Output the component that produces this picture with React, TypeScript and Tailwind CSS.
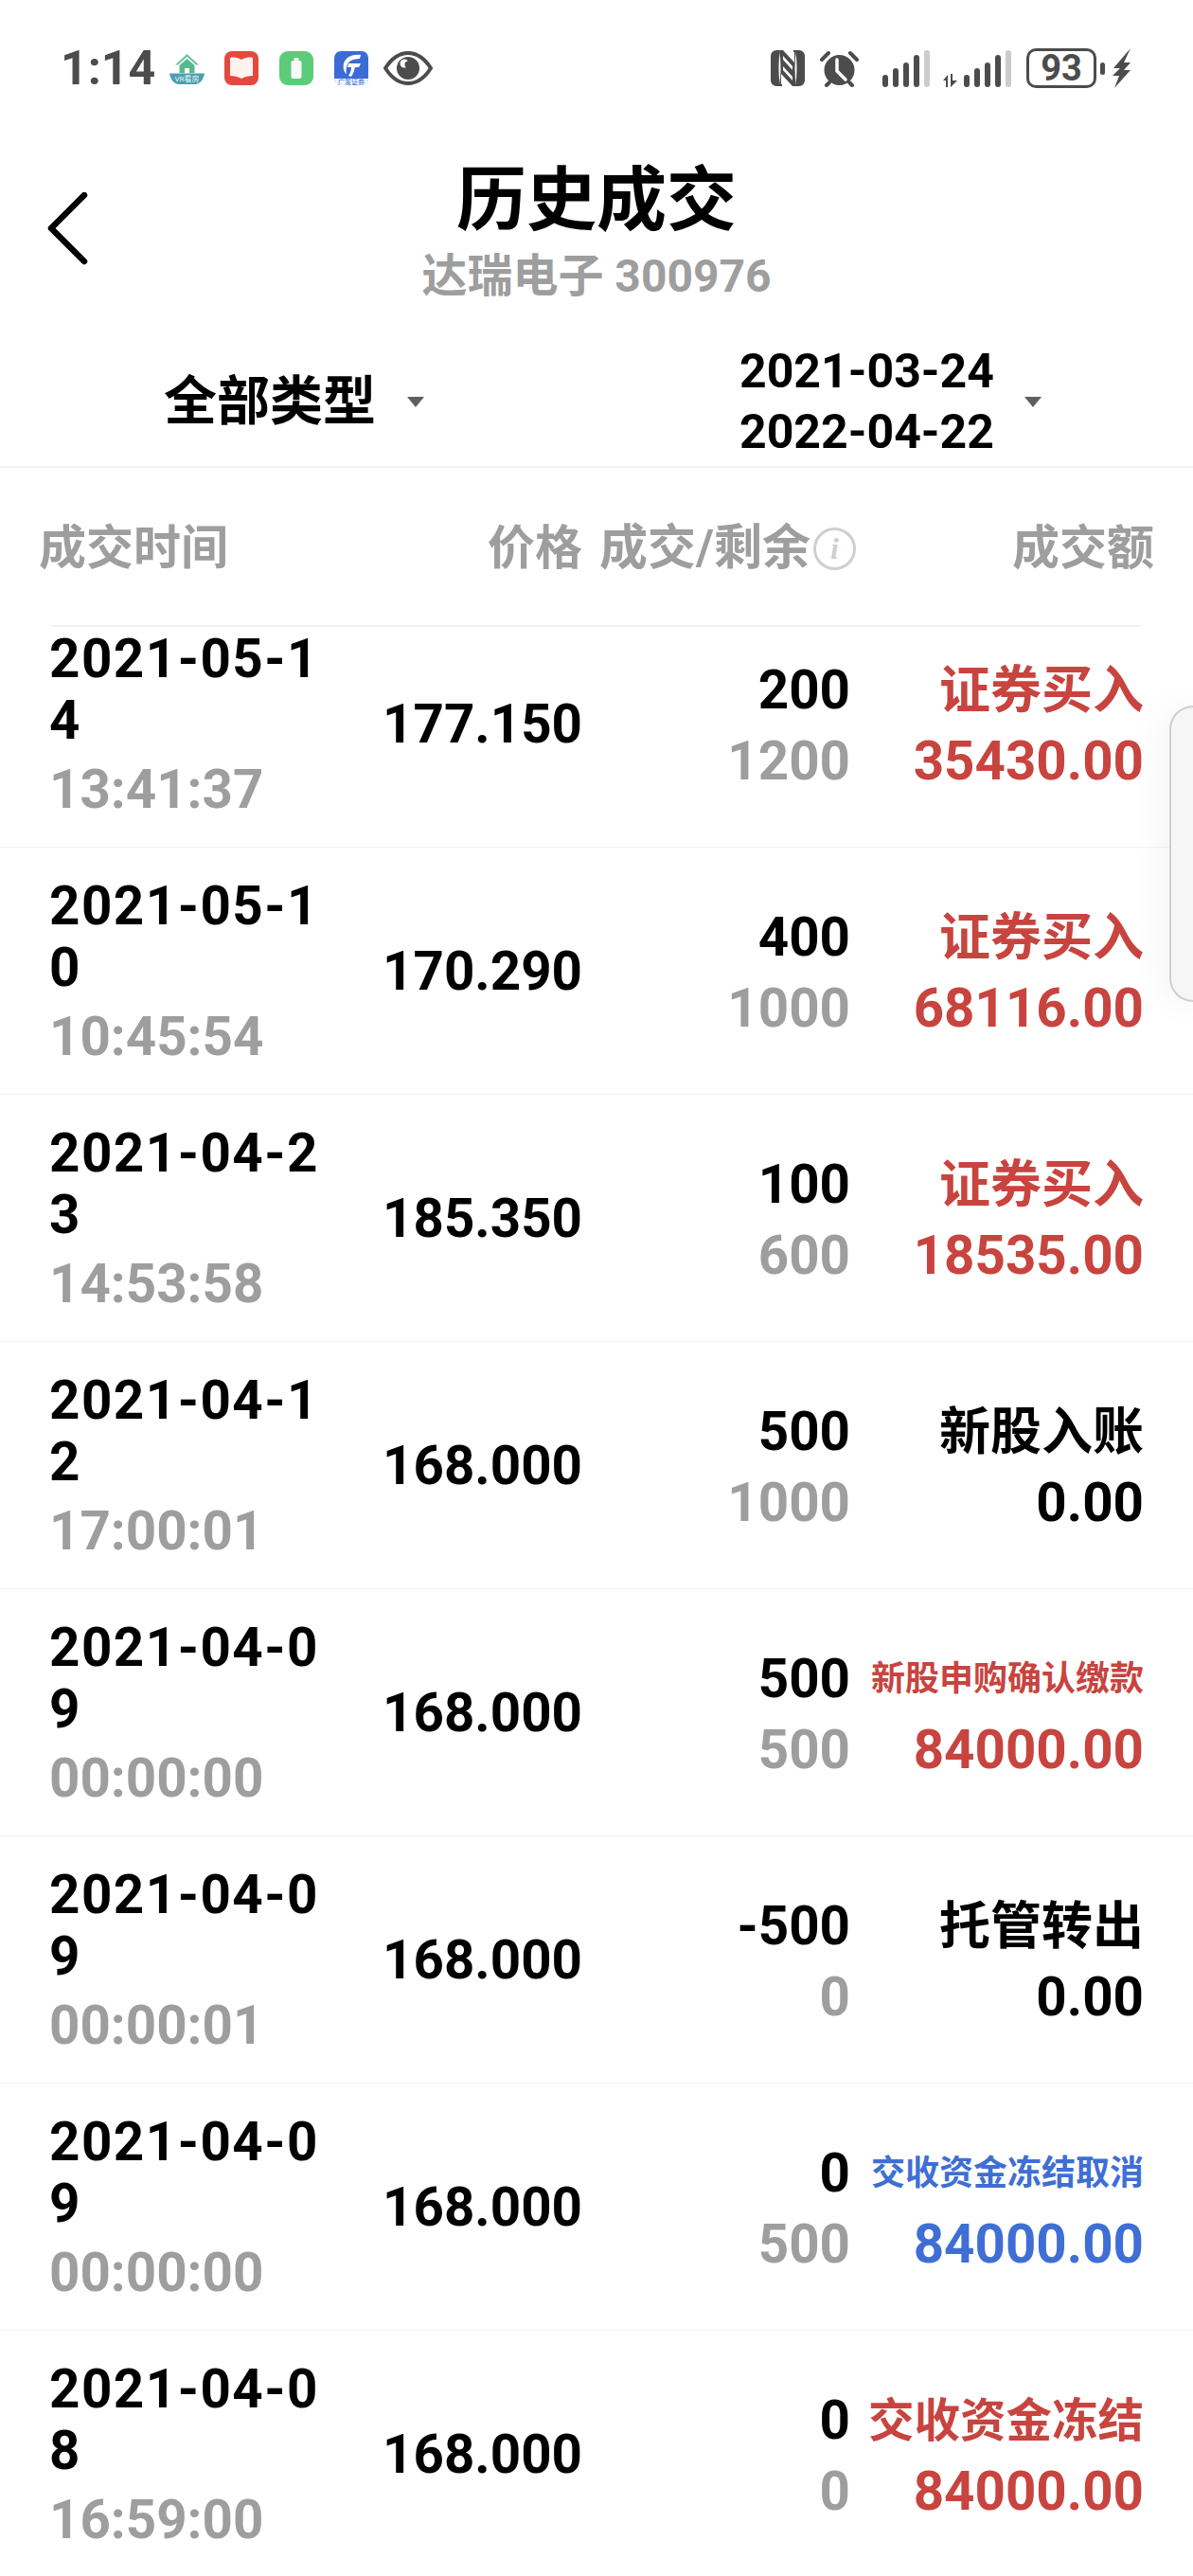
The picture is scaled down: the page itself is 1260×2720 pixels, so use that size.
import React from "react";

type Trade = {
  day: string;
  time: string;
  price: string;
  filled: string;
  left: string;
  kind: string;
  amount: string;
  tone: "red" | "black" | "blue";
  kindSize?: "sm" | "lg";
};

const trades: Trade[] = [
  { day: "2021-05-14", time: "13:41:37", price: "177.150", filled: "200", left: "1200", kind: "证券买入", amount: "35430.00", tone: "red" },
  { day: "2021-05-10", time: "10:45:54", price: "170.290", filled: "400", left: "1000", kind: "证券买入", amount: "68116.00", tone: "red" },
  { day: "2021-04-23", time: "14:53:58", price: "185.350", filled: "100", left: "600", kind: "证券买入", amount: "18535.00", tone: "red" },
  { day: "2021-04-12", time: "17:00:01", price: "168.000", filled: "500", left: "1000", kind: "新股入账", amount: "0.00", tone: "black" },
  { day: "2021-04-09", time: "00:00:00", price: "168.000", filled: "500", left: "500", kind: "新股申购确认缴款", amount: "84000.00", tone: "red", kindSize: "sm" },
  { day: "2021-04-09", time: "00:00:01", price: "168.000", filled: "-500", left: "0", kind: "托管转出", amount: "0.00", tone: "black" },
  { day: "2021-04-09", time: "00:00:00", price: "168.000", filled: "0", left: "500", kind: "交收资金冻结取消", amount: "84000.00", tone: "blue", kindSize: "sm" },
  { day: "2021-04-08", time: "16:59:00", price: "168.000", filled: "0", left: "0", kind: "交收资金冻结", amount: "84000.00", tone: "red", kindSize: "lg" },
];

const toneClass = {
  red: "text-[#c8443f]",
  black: "text-black",
  blue: "text-[#3f6fd4]",
};

function HomeBadge() {
  return (
    <svg width="37" height="33" viewBox="0 0 37 33" className="mr-[21px]">
      <path d="M18.500 1 L31 12.500 L28 12.500 L18.500 4 L9 12.500 L6 12.500 Z" fill="#6cc3a0" />
      <path d="M10.500 13 L18.500 6 L26.500 13 V21 H21 V16 H16 V21 H10.500 Z" fill="#57b98f" />
      <path d="M0 21.500 H37 C36 28 32 33 27 33 H10 C5 33 1 28 0 21.500 Z" fill="#4b9fb0" />
      <text x="18.500" y="30" fontSize="8" textAnchor="middle" fill="#e6f5f5" fontFamily="Roboto, 'Noto Sans CJK SC', sans-serif">VR看房</text>
    </svg>
  );
}

function BookBadge() {
  return (
    <svg width="36" height="36" viewBox="0 0 36 36" className="mr-[22px]">
      <rect width="36" height="36" rx="8" fill="#e4483f" />
      <path d="M6 7 C10 6 15 7 18 9 C21 7 26 6 30 7 V26 C26 26 21 27 18 29 C15 27 10 26 6 26 Z" fill="#fff3f0" />
    </svg>
  );
}

function BatteryBadge() {
  return (
    <svg width="36" height="36" viewBox="0 0 36 36" className="mr-[22px]">
      <rect width="36" height="36" rx="9" fill="#5ccb7a" />
      <rect x="12.500" y="10" width="11" height="19" rx="2" fill="#f4fbf5" />
      <rect x="15.500" y="7" width="5" height="3" rx="1" fill="#f4fbf5" />
    </svg>
  );
}

function BrokerBadge() {
  return (
    <svg width="36" height="36" viewBox="0 0 36 36" className="mr-[16px]">
      <rect width="36" height="36" rx="7" fill="#3d6bd6" />
      <path d="M0 29 H36 V30 A6 6 0 0 1 30 36 H6 A6 6 0 0 1 0 30 Z" fill="#eef3fc" />
      <path d="M28 4 C20 3 12 6 10 13 C9 18 10 22 13 24 C12 18 13 11 20 9 C23 8 26 8 27 8 Z" fill="#fff" />
      <path d="M15 13 H28 L26 17 H22 C21 21 20 24 18 27 L15 26 C17 23 18 20 18 17 H14 Z" fill="#fff" />
      <text x="18" y="35" fontSize="7" textAnchor="middle" fill="#3d6bd6" fontFamily="'Noto Sans CJK SC', sans-serif">广发证券</text>
    </svg>
  );
}

function EyeGlyph() {
  return (
    <svg width="52" height="36" viewBox="0 0 52 36">
      <path d="M2 18 C9 7 17 2 26 2 C35 2 43 7 50 18 C43 29 35 34 26 34 C17 34 9 29 2 18 Z" fill="none" stroke="#4c4c4c" strokeWidth="4" />
      <circle cx="26" cy="18" r="12" fill="#4c4c4c" />
      <circle cx="22" cy="13" r="4.500" fill="#fff" />
      <circle cx="26" cy="14" r="3.500" fill="#4c4c4c" />
    </svg>
  );
}

function NfcGlyph() {
  return (
    <svg width="36" height="38" viewBox="0 0 36 38" className="mr-[16px]">
      <path d="M6 0 H10 C8 10 8 28 10 38 H6 A6 6 0 0 1 0 32 V6 A6 6 0 0 1 6 0 Z" fill="#4c4c4c" />
      <path d="M30 0 H26 C28 10 28 28 26 38 H30 A6 6 0 0 0 36 32 V6 A6 6 0 0 0 30 0 Z" fill="#4c4c4c" />
      <path d="M9 0 H13 L25 13 V2 H24 V0 H27 C25 12 25 26 27 38 H23 L11 25 V36 H12 V38 H9 C11 26 11 12 9 0 Z" fill="#4c4c4c" />
      <path d="M13 6 L23 17 V21 L13 10 Z M13 17 L23 28 V32 L13 21 Z" fill="#fff" />
    </svg>
  );
}

function AlarmGlyph() {
  return (
    <svg width="41" height="39" viewBox="0 0 41 39" className="mr-[25px]">
      <circle cx="20.500" cy="21" r="16" fill="#4c4c4c" />
      <path d="M2 10 L9 3 M39 10 L32 3" stroke="#4c4c4c" strokeWidth="4" strokeLinecap="round" />
      <path d="M7 37 L10 34 M34 37 L31 34" stroke="#4c4c4c" strokeWidth="4" strokeLinecap="round" />
      <path d="M18 10 V22 L27 31" stroke="#fff" strokeWidth="3.500" fill="none" strokeLinecap="round" strokeLinejoin="round" />
    </svg>
  );
}

function SignalBars({ withArrows }: { withArrows?: boolean }) {
  const heights = [13, 20, 26, 34];
  return (
    <div className="flex items-end gap-[4.500px] h-[39px]">
      {withArrows && (
        <svg width="18" height="14" viewBox="0 0 18 14" className="mr-[-1px]">
          <path d="M0 7 L5 1 V14 H3 V7 Z M8 0 H10 V7 H15 L8 14 Z" fill="#4c4c4c" />
        </svg>
      )}
      {heights.map((h) => (
        <div key={h} className="w-[6.500px] rounded-full bg-[#4c4c4c]" style={{ height: h }} />
      ))}
      <div className="w-[6.500px] h-[39px] rounded-full bg-[#cccccc]" />
    </div>
  );
}

function BatteryGlyph() {
  return (
    <div className="flex items-center">
      <div className="w-[74px] h-[42px] rounded-[10px] border-[3px] border-[#4c4c4c] flex items-center justify-center text-[38px] font-bold text-[#4c4c4c] leading-none">
        93
      </div>
      <div className="ml-[4px] w-[5px] h-[13px] rounded-full bg-[#4c4c4c]" />
      <svg width="20" height="42" viewBox="0 0 20 42" className="ml-[8px]">
        <path d="M19 0 L1 21 L8 21 L0 29 L7 29 L2 42 L19 23 L12 23 L19 15 L12 15 Z" fill="#4c4c4c" />
      </svg>
    </div>
  );
}

function Caret() {
  return (
    <svg width="20" height="12" viewBox="0 0 20 12">
      <path d="M1 1 H19 L10 12 Z" fill="#5f5f5f" />
    </svg>
  );
}

function InfoMark() {
  return (
    <span className="ml-[3px] inline-flex h-[45px] w-[45px] items-center justify-center rounded-full border-[3px] border-[#cfcfcf] text-[32px] italic leading-none text-[#cfcfcf]" style={{ fontFamily: "'Liberation Serif', serif" }}>
      i
    </span>
  );
}

function StatusBar() {
  return (
    <div className="flex h-[146px] items-start justify-between pl-[64px] pr-[65px] pt-[51px]">
      <div className="flex h-[42px] items-center">
        <span className="mr-[15px] text-[50px] font-bold leading-none text-[#4c4c4c]">1:14</span>
        <HomeBadge />
        <BookBadge />
        <BatteryBadge />
        <BrokerBadge />
        <EyeGlyph />
      </div>
      <div className="flex h-[42px] items-center">
        <NfcGlyph />
        <AlarmGlyph />
        <div className="mr-[14px]">
          <SignalBars />
        </div>
        <div className="mr-[16px]">
          <SignalBars withArrows />
        </div>
        <BatteryGlyph />
      </div>
    </div>
  );
}

function TradeRow({ t }: { t: Trade }) {
  const kindClass =
    t.kindSize === "sm"
      ? "text-[36px] font-bold"
      : t.kindSize === "lg"
        ? "text-[48.500px] font-bold"
        : "text-[54px] font-bold";
  return (
    <div className="flex h-[261px] items-center border-b-[1px] border-[#f2f2f2] pl-[52px] pr-[52px] pt-[3px]">
      <div className="w-[290px] break-all text-[56.500px] font-bold leading-[65px] tracking-[1.500px] text-black">
        {t.day}
        <div className="mt-[8px] tracking-normal text-[#9e9e9e]">{t.time}</div>
      </div>
      <div className="w-[273px] text-right text-[56.500px] font-bold text-black">{t.price}</div>
      <div className="mt-[3px] w-[283px] text-right text-[56.500px] font-bold leading-[75px]">
        <div className="text-black">{t.filled}</div>
        <div className="text-[#9e9e9e]">{t.left}</div>
      </div>
      <div className={`mt-[3px] flex-1 text-right leading-[75px] ${toneClass[t.tone]}`}>
        <div className={kindClass}>{t.kind}</div>
        <div className="text-[56.500px] font-bold">{t.amount}</div>
      </div>
    </div>
  );
}

export default function App() {
  return (
    <div
      className="relative h-[2720px] w-[1260px] overflow-hidden bg-white"
      style={{ fontFamily: "Roboto, 'Noto Sans CJK SC', sans-serif" }}
    >
      <StatusBar />

      <header className="relative h-[190px] text-center">
        <svg width="48" height="78" viewBox="0 0 48 78" className="absolute left-[48px] top-[57px]">
          <path d="M41 3 L6 38 L41 73" fill="none" stroke="#000" strokeWidth="6.500" strokeLinecap="round" strokeLinejoin="round" />
        </svg>
        <h1 className="pt-[18px] text-[74px] font-bold leading-[96px] text-black">历史成交</h1>
        <div className="mt-[4px] text-[48px] font-bold leading-[56px] text-[#9e9e9e]">达瑞电子 300976</div>
      </header>

      <div className="flex h-[158px] items-center border-b-[2px] border-[#f2f2f2] pt-[20px]">
        <div className="flex items-center pl-[173px]">
          <span className="text-[56px] font-bold leading-none text-black">全部类型</span>
          <span className="ml-[32px]"><Caret /></span>
        </div>
        <div className="ml-[332px] flex items-center">
          <div className="text-[50px] font-bold leading-[64px] text-black">
            <div>2021-03-24</div>
            <div>2022-04-22</div>
          </div>
          <span className="ml-[31px]"><Caret /></span>
        </div>
      </div>

      <div className="flex h-[166px] items-start pt-[55px] text-[50px] font-bold leading-[60px] text-[#9e9e9e]">
        <div className="pl-[41px]">成交时间</div>
        <div className="ml-[274px]">价格</div>
        <div className="ml-[18px] flex items-center text-[51px]">
          成交/剩余
          <InfoMark />
        </div>
        <div className="ml-auto pr-[41px]">成交额</div>
      </div>
      <div className="mx-[54px] h-[2px] bg-[#f2f2f2]" />

      <div className="-mt-[28px]">
        {trades.map((t) => (
          <TradeRow key={t.day + t.time} t={t} />
        ))}
      </div>

      {/* Edge handle for the floating side panel */}
      <div className="absolute right-0 top-[745px] h-[313px] w-[25px] rounded-l-[26px] border-y-[2px] border-l-[2px] border-[#cfcfcf] bg-[#f6f6f6] shadow-[0_0_40px_rgba(0,0,0,0.08)]" />
    </div>
  );
}
